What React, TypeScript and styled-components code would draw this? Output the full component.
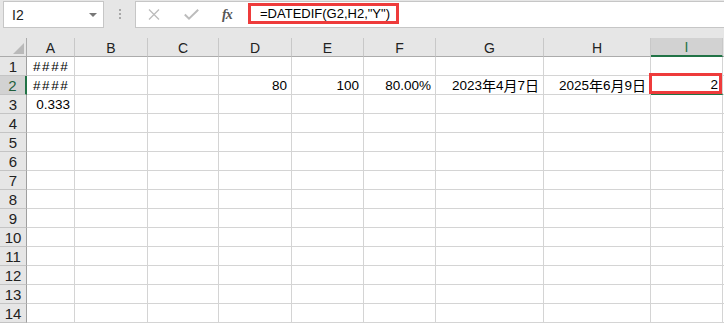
import React from "react";
import styled, { createGlobalStyle } from "styled-components";

const GlobalStyle = createGlobalStyle`
  html, body {
    margin: 0;
    padding: 0;
    background: #ffffff;
    overflow: hidden;
  }
  body {
    font-family: "Liberation Sans", "Noto Sans CJK SC", sans-serif;
    color: #000;
  }
`;

const COLS = [27, 48, 73, 71, 73, 72, 72, 108, 107, 72];
const LETTERS = ["A", "B", "C", "D", "E", "F", "G", "H", "I"];
const TEMPLATE = COLS.map((w) => `${w}px`).join(" ") + " 1fr";

const Page = styled.div`
  width: 724px;
  height: 323px;
  background: #e6e6e6;
  display: flex;
  flex-direction: column;
`;

const TopBar = styled.div`
  height: 28px;
  display: flex;
  align-items: stretch;
  box-sizing: border-box;
  padding: 1px 0 0 3px;
`;

const NameBox = styled.div`
  width: 101px;
  height: 27px;
  box-sizing: border-box;
  background: #fff;
  border: 1px solid #c6c6c6;
  display: flex;
  align-items: center;
  justify-content: space-between;
  padding: 0 6px 0 8px;
  font-size: 14px;
  color: #222;
`;

const Caret = styled.span`
  width: 0;
  height: 0;
  border-left: 4px solid transparent;
  border-right: 4px solid transparent;
  border-top: 4px solid #777;
`;

const Grip = styled.div`
  width: 31px;
  display: flex;
  flex-direction: column;
  align-items: center;
  justify-content: center;
  gap: 2px;
  padding-bottom: 1px;

  span {
    width: 2px;
    height: 2px;
    background: #a8a8a8;
  }
`;

const FormulaBar = styled.div`
  flex: 1;
  height: 27px;
  box-sizing: border-box;
  background: #fff;
  border: 1px solid #c6c6c6;
  border-right: none;
  display: flex;
  align-items: center;
`;

const IconGroup = styled.div`
  display: flex;
  align-items: center;
  width: 112px;
  padding-left: 12px;
  box-sizing: border-box;
`;

const IconSlot = styled.span<{ $w: number }>`
  width: ${(p) => p.$w}px;
  display: flex;
  align-items: center;
`;

const Fx = styled.span`
  font-family: "Liberation Serif", "DejaVu Serif", serif;
  font-style: italic;
  font-size: 14px;
  color: #555;
  letter-spacing: -1px;
  font-weight: bold;
`;

const FormulaText = styled.div`
  height: 21px;
  box-sizing: border-box;
  border: 3px solid #ee3b3b;
  display: flex;
  align-items: center;
  padding: 0 6px 0 9px;
  font-size: 13px;
  margin-top: -2px;
  color: #000;
`;

const Gap = styled.div`
  height: 10px;
`;

const Sheet = styled.div`
  display: grid;
  grid-template-columns: ${TEMPLATE};
  grid-auto-rows: 19px;
  background: #fff;
  flex: 1;
  overflow: hidden;
`;

const ColHead = styled.div<{ $sel?: boolean }>`
  box-sizing: border-box;
  background: ${(p) => (p.$sel ? "#d2d2d2" : "#e6e6e6")};
  border-right: 1px solid #c8c8c8;
  border-bottom: ${(p) => (p.$sel ? "2px solid #217346" : "1px solid #ababab")};
  display: flex;
  align-items: center;
  justify-content: center;
  font-size: 14px;
  color: ${(p) => (p.$sel ? "#217346" : "#222")};
  padding-top: 1px;
`;

const Corner = styled.div`
  box-sizing: border-box;
  background: #e6e6e6;
  border-right: 1px solid #ababab;
  border-bottom: 1px solid #ababab;
  display: flex;
  align-items: flex-end;
  justify-content: flex-end;
  padding: 0 2px 2px 0;

  span {
    width: 11px;
    height: 11px;
    background: #b9b9b9;
    clip-path: polygon(100% 0, 100% 100%, 0 100%);
  }
`;

const RowHead = styled.div<{ $sel?: boolean }>`
  box-sizing: border-box;
  background: ${(p) => (p.$sel ? "#d2d2d2" : "#e6e6e6")};
  border-right: ${(p) => (p.$sel ? "2px solid #217346" : "1px solid #9f9f9f")};
  border-bottom: 1px solid #c4c4c4;
  display: flex;
  align-items: center;
  justify-content: center;
  font-size: 15px;
  color: ${(p) => (p.$sel ? "#1f5e3c" : "#222")};
`;

const Cell = styled.div<{ $align?: "left" | "right"; $marked?: boolean }>`
  position: relative;
  box-sizing: border-box;
  border-right: 1px solid #d4d4d4;
  border-bottom: 1px solid #d4d4d4;
  display: flex;
  align-items: center;
  justify-content: ${(p) => (p.$align === "left" ? "flex-start" : "flex-end")};
  padding: 0 4px 0 6px;
  font-size: 13.5px;
  white-space: nowrap;
  color: #000;

  ${(p) =>
    p.$marked &&
    `
    border-bottom: 2px solid #217346;
    &::after {
      content: "";
      position: absolute;
      left: -2px;
      top: -3px;
      right: 0;
      bottom: -1px;
      border: 3px solid #ee3b3b;
    }
  `}
`;

const Hashes = styled.span`
  letter-spacing: 1.6px;
`;

const Cjk = styled.span`
  font-family: "Noto Sans CJK SC", sans-serif;
  font-size: 14px;
`;

type Entry = { text: React.ReactNode; align?: "left" | "right"; marked?: boolean };

const DateText = ({ value }: { value: string }) => (
  <>
    {value.split(/([年月日])/).map((part, i) =>
      /[年月日]/.test(part) ? <Cjk key={i}>{part}</Cjk> : <span key={i}>{part}</span>
    )}
  </>
);

const DATA: Record<string, Entry> = {
  "1-A": { text: <Hashes>####</Hashes>, align: "left" },
  "2-A": { text: <Hashes>####</Hashes>, align: "left" },
  "3-A": { text: "0.333" },
  "2-D": { text: "80" },
  "2-E": { text: "100" },
  "2-F": { text: "80.00%" },
  "2-G": { text: <DateText value="2023年4月7日" /> },
  "2-H": { text: <DateText value="2025年6月9日" /> },
  "2-I": { text: "2", marked: true },
};

const Cross = () => (
  <svg width="12" height="11" viewBox="0 0 12 11">
    <path d="M1 0.5 L11 10.5 M11 0.5 L1 10.5" stroke="#bcbcbc" strokeWidth="1.3" fill="none" />
  </svg>
);

const Check = () => (
  <svg width="15" height="11" viewBox="0 0 15 11">
    <path d="M0.8 5.5 L5 9.6 L14.2 0.8" stroke="#bcbcbc" strokeWidth="2" fill="none" />
  </svg>
);

export default function App() {
  const rows = Array.from({ length: 14 }, (_, i) => i + 1);
  return (
    <>
      <GlobalStyle />
      <Page>
        <TopBar>
          <NameBox>
            <span>I2</span>
            <Caret />
          </NameBox>
          <Grip>
            <span />
            <span />
            <span />
          </Grip>
          <FormulaBar>
            <IconGroup>
              <IconSlot $w={36}>
                <Cross />
              </IconSlot>
              <IconSlot $w={38}>
                <Check />
              </IconSlot>
              <IconSlot $w={26}>
                <Fx>fx</Fx>
              </IconSlot>
            </IconGroup>
            <FormulaText>=DATEDIF(G2,H2,"Y")</FormulaText>
          </FormulaBar>
        </TopBar>
        <Gap />
        <Sheet>
          <Corner>
            <span />
          </Corner>
          {LETTERS.map((l) => (
            <ColHead key={l} $sel={l === "I"}>
              {l}
            </ColHead>
          ))}
          <ColHead />
          {rows.map((r) => (
            <React.Fragment key={r}>
              <RowHead $sel={r === 2}>{r}</RowHead>
              {LETTERS.map((l) => {
                const d = DATA[`${r}-${l}`];
                return (
                  <Cell key={l} $align={d?.align} $marked={d?.marked}>
                    {d?.text}
                  </Cell>
                );
              })}
              <Cell />
            </React.Fragment>
          ))}
        </Sheet>
      </Page>
    </>
  );
}
